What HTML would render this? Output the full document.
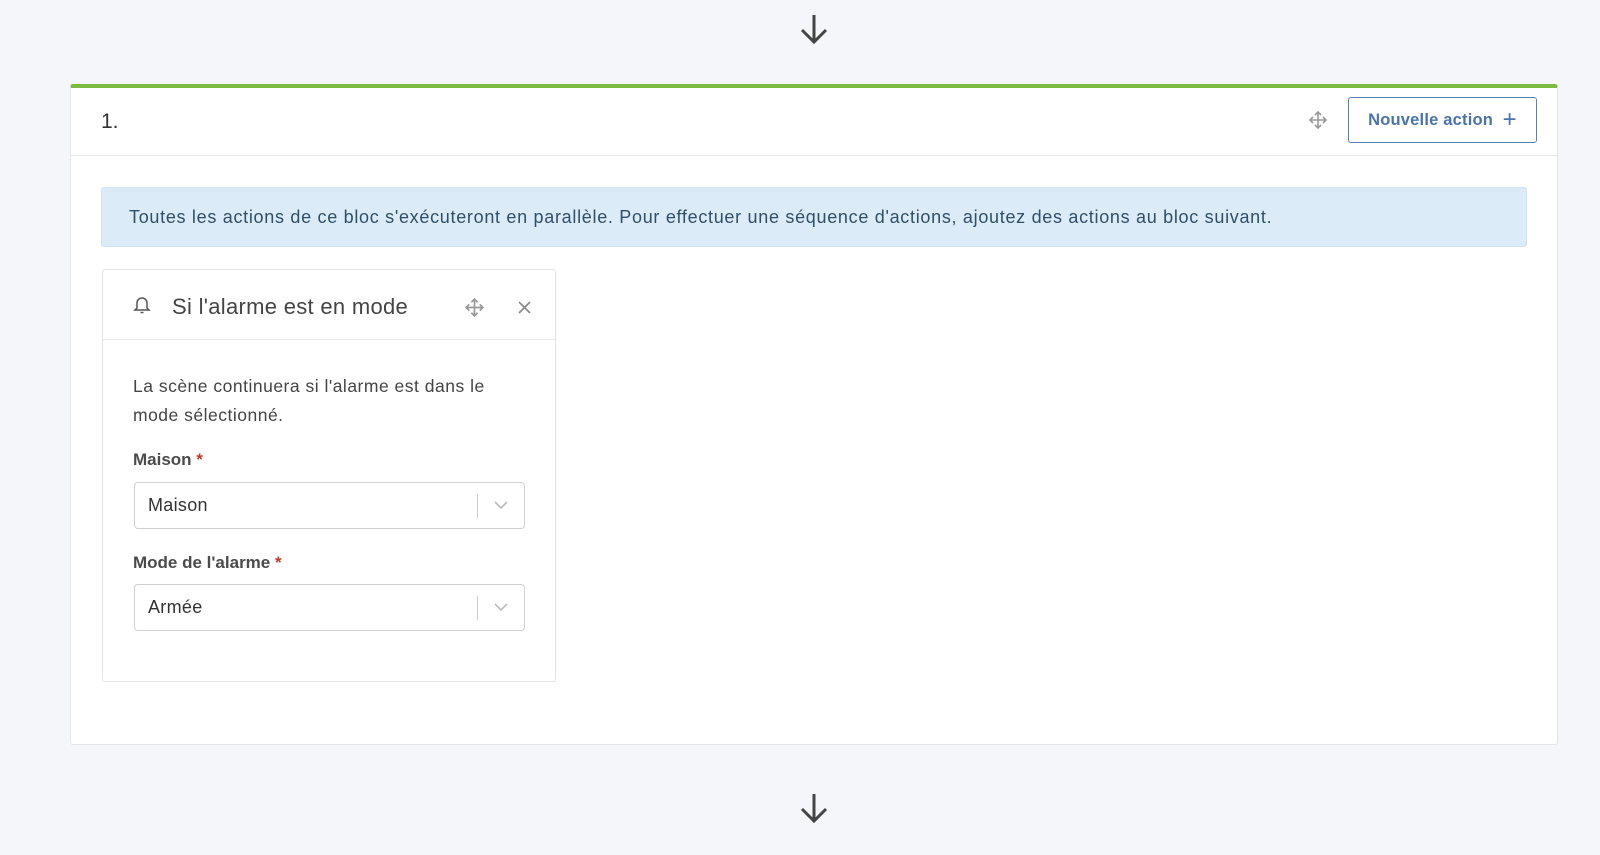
<!DOCTYPE html>
<html><head><meta charset="utf-8"><style>
*{box-sizing:border-box;margin:0;padding:0}
body{width:1600px;height:855px;background:#f5f6fa;font-family:"Liberation Sans",sans-serif;position:relative;overflow:hidden;color:#333}
.abs{position:absolute}
.card{left:70px;top:84px;width:1488px;height:661px;background:#fff;border:1px solid #e3e5ea;border-top:4px solid #7cbb42;border-radius:3px}
.hdrline{left:71px;top:155px;width:1486px;height:1px;background:#e6e7eb}
.btn{left:1348px;top:97px;width:189px;height:46px;border:1.5px solid #5a7fb3;border-radius:3px;color:#4a73ad;font-size:16.5px;font-weight:bold;display:flex;align-items:center;justify-content:center;letter-spacing:.2px}
.alert{left:101px;top:187px;width:1426px;height:60px;background:#dcebf8;border:1px solid #cfe3f4;border-radius:3px;color:#2f4f6a;font-size:18px;letter-spacing:0.7px;line-height:58px;padding-left:27px;white-space:nowrap}
.inner{left:102px;top:269px;width:454px;height:413px;border:1px solid #e2e3e7;border-radius:3px;background:#fff}
.ihl{left:103px;top:339px;width:452px;height:1px;background:#e6e7eb}
.lbl{font-size:17px;font-weight:bold;color:#4b4b4b}
.lbl b{color:#c0392b}
.sel{left:134px;width:391px;height:47px;border:1.5px solid #cfd0d4;border-radius:4px;font-size:18px;color:#333;padding-left:13px;line-height:44px;letter-spacing:.3px}
.sel .sep{position:absolute;left:342px;top:11px;width:1px;height:24px;background:#ccc}
.sel svg{position:absolute;right:15px;top:16px}
</style></head><body>
<svg class="abs" style="left:799px;top:13px" width="30" height="32" viewBox="0 0 30 32"><path d="M15 2V29M3 17L15 29L27 17" fill="none" stroke="#444" stroke-width="3"/></svg>
<div class="abs card"></div>
<div class="abs hdrline"></div>
<div class="abs" style="left:101px;top:110px;font-size:21px;color:#333">1.</div>
<svg class="abs" style="left:1308px;top:110px" width="20" height="20" viewBox="0 0 20 20"><g fill="none" stroke="#999" stroke-width="1.6"><path d="M10 2V18M2 10H18M7 5L10 2L13 5M7 15L10 18L13 15M5 7L2 10L5 13M15 7L18 10L15 13"/></g></svg>
<div class="abs btn">Nouvelle action&nbsp;&nbsp;<span style="font-size:24px;font-weight:normal;line-height:1">+</span></div>
<div class="abs alert">Toutes les actions de ce bloc s'exécuteront en parallèle. Pour effectuer une séquence d'actions, ajoutez des actions au bloc suivant.</div>
<div class="abs inner"></div>
<div class="abs ihl"></div>
<svg class="abs" style="left:133px;top:295px" width="18" height="20" viewBox="0 0 18 20"><path d="M4 13V8a5 5 0 0 1 10 0v5l2 2H2z M7.5 17.5h3" fill="none" stroke="#555" stroke-width="1.5"/></svg>
<div class="abs" style="left:172px;top:294px;font-size:22px;letter-spacing:.3px;color:#444">Si l'alarme est en mode</div>
<svg class="abs" style="left:464px;top:297px" width="21" height="21" viewBox="0 0 20 20"><g fill="none" stroke="#999" stroke-width="1.6"><path d="M10 2V18M2 10H18M7 5L10 2L13 5M7 15L10 18L13 15M5 7L2 10L5 13M15 7L18 10L15 13"/></g></svg>
<svg class="abs" style="left:517px;top:300px" width="15" height="15" viewBox="0 0 15 15"><path d="M2 2L13 13M13 2L2 13" stroke="#888" stroke-width="1.6"/></svg>
<div class="abs" style="left:133px;top:372px;width:395px;font-size:17.5px;letter-spacing:.5px;line-height:28.5px;color:#444">La scène continuera si l'alarme est dans le mode sélectionné.</div>
<div class="abs lbl" style="left:133px;top:450px">Maison <b>*</b></div>
<div class="abs sel" style="top:482px">Maison<span class="sep"></span><svg width="16" height="12" viewBox="0 0 16 12"><path d="M2 3L8 9L14 3" fill="none" stroke="#bbb" stroke-width="1.6"/></svg></div>
<div class="abs lbl" style="left:133px;top:553px">Mode de l'alarme <b>*</b></div>
<div class="abs sel" style="top:584px">Armée<span class="sep"></span><svg width="16" height="12" viewBox="0 0 16 12"><path d="M2 3L8 9L14 3" fill="none" stroke="#bbb" stroke-width="1.6"/></svg></div>
<svg class="abs" style="left:799px;top:792px" width="30" height="32" viewBox="0 0 30 32"><path d="M15 2V29M3 17L15 29L27 17" fill="none" stroke="#444" stroke-width="3"/></svg>
</body></html>
